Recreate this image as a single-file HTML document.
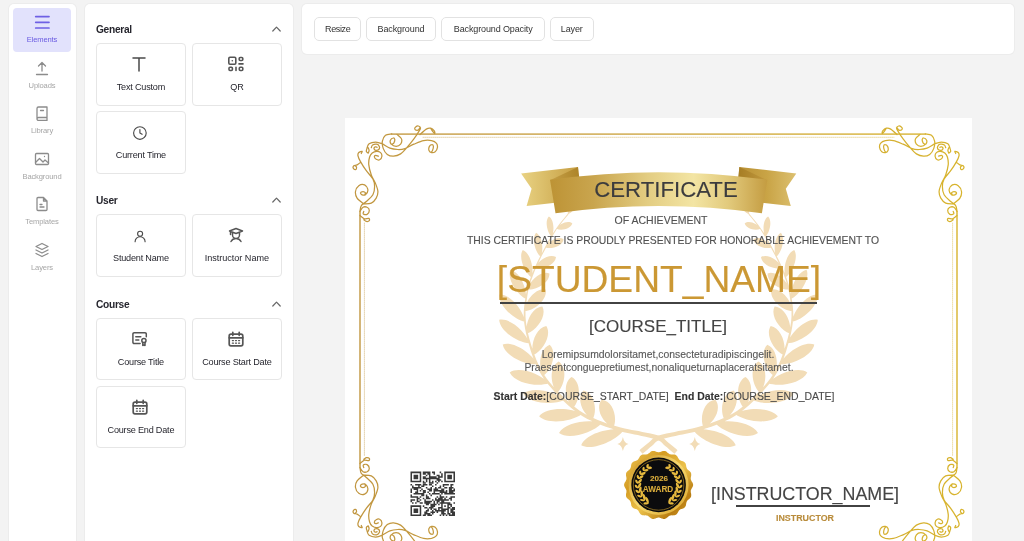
<!DOCTYPE html>
<html lang="en">
<head>
<meta charset="utf-8">
<title>Certificate Builder</title>
<style>
*{box-sizing:border-box;margin:0;padding:0}
html,body{width:1024px;height:541px;overflow:hidden;background:#f3f3f3;font-family:"Liberation Sans",sans-serif;color:#222}
.abs{position:absolute}
.panel{position:absolute;background:#fff;border-radius:5px;box-shadow:0 0 0 1px #ececec}
#nav{left:9px;top:4px;width:67px;height:560px}
.tile{position:absolute;left:4.400px;width:58px;height:44px;border-radius:4px;text-align:center}
.tile.active{background:#e2e2fc}
.tile .lbl{position:absolute;left:0;width:100%;top:27px;font-size:7.6px;line-height:10px;color:#a6a6a6;letter-spacing:-.15px;will-change:transform}
.tile.active .lbl{color:#6a5be2}
.tile svg{position:absolute;left:21px;top:6px;width:16px;height:16px;fill:none;stroke:#8c8c8c;stroke-width:1.3;stroke-linecap:round;stroke-linejoin:round}
.tile.active svg{stroke:#6e60e4;stroke-width:1.7}
#elements{left:85px;top:4px;width:208px;height:560px}
.sec{position:absolute;left:11px;font-size:10.2px;font-weight:bold;color:#26262e;line-height:14px;letter-spacing:-.3px;will-change:transform}
.chev{position:absolute;left:187px;width:9px;height:6px;fill:none;stroke:#666;stroke-width:1.2;stroke-linecap:round;stroke-linejoin:round}
.card{position:absolute;width:89.800px;height:62.500px;border:1px solid #e6e6e6;border-radius:4px;background:#fff;text-align:center}
.card .t{position:absolute;left:0;width:100%;top:36.500px;font-size:9.1px;line-height:12px;color:#26262e;white-space:nowrap;letter-spacing:-.2px;will-change:transform}
.card svg{position:absolute;left:34.400px;top:12px;width:16px;height:16px;fill:none;stroke:#4a4a4a;stroke-width:1.15;stroke-linecap:round;stroke-linejoin:round}
.c1{left:11px}.c2{left:107.300px}
#toolbar{left:302px;top:4px;width:712px;height:50px}
.btn{position:absolute;top:13px;height:24px;border:1px solid #e2e2e2;border-radius:5px;font-size:9px;line-height:23px;letter-spacing:-.12px;will-change:transform;text-align:center;color:#333;background:#fff;white-space:nowrap}
#canvas .ct{position:absolute;white-space:nowrap;transform:translateX(-50%);will-change:transform;-webkit-text-stroke:.12px}
#canvas b{color:#333}
#canvas{position:absolute;left:345px;top:118px;width:627px;height:440px;background:#fff;overflow:hidden}
</style>
</head>
<body>
<div id="nav" class="panel">
  <div class="tile active" style="top:4px">
    <svg viewBox="0 0 16 16"><path d="M1.700 2.600h13.300M1.700 8.300h13.300M1.700 14h13.300"/></svg>
    <div class="lbl">Elements</div>
  </div>
  <div class="tile" style="top:49.5px">
    <svg viewBox="0 0 16 16"><path d="M8 11V2.5M4.5 6L8 2.5 11.500 6M2.500 14.500h11"/></svg>
    <div class="lbl">Uploads</div>
  </div>
  <div class="tile" style="top:95px">
    <svg viewBox="0 0 16 16"><path d="M3 14V3.500a1.500 1.500 0 0 1 1.500-1.500h8.500v13.500H4.500a1.500 1.500 0 0 1 0-3h8.500M6.500 5.500h3"/></svg>
    <div class="lbl">Library</div>
  </div>
  <div class="tile" style="top:140.500px">
    <svg viewBox="0 0 16 16"><rect x="1.500" y="2.500" width="13" height="11" rx="1"/><path d="M1.500 11.500l4-4 3.500 3.500 2-2 3.500 3M10.500 5.500h.01"/></svg>
    <div class="lbl">Background</div>
  </div>
  <div class="tile" style="top:186px">
    <svg viewBox="0 0 16 16"><path d="M9.500 1.500H4a1 1 0 0 0-1 1v11a1 1 0 0 0 1 1h8a1 1 0 0 0 1-1V5zM9.500 1.500V5H13M6 8.500h2M6 11h4"/></svg>
    <div class="lbl">Templates</div>
  </div>
  <div class="tile" style="top:231.500px">
    <svg viewBox="0 0 16 16"><path d="M8 1.500l6 3-6 3-6-3zM2 8l6 3 6-3M2 11.500l6 3 6-3"/></svg>
    <div class="lbl">Layers</div>
  </div>
</div>

<div id="elements" class="panel">
  <div class="sec" style="top:19.100px">General</div>
  <svg class="chev" style="top:22px" viewBox="0 0 9 6"><path d="M.8 5L4.500 1.200 8.200 5"/></svg>
  <div class="card c1" style="top:39.400px"><svg viewBox="0 0 16 16"><path d="M2 2h12M8 2v13" style="stroke-width:1.500"/></svg><div class="t">Text Custom</div></div>
  <div class="card c2" style="top:39.400px"><svg viewBox="0 0 16 16" style="stroke-width:1.600;stroke:#555"><rect x=".8" y="1.200" width="7" height="7" rx="1.200"/><rect x="11.200" y="1.500" width="3.600" height="3" rx="1"/><path d="M11 7.900h4M4.300 4.700h.01M8 11.200v3.300"/><rect x="1" y="11.200" width="3.400" height="3.300" rx="1"/><rect x="11.300" y="11.200" width="3.500" height="3.300" rx="1"/></svg><div class="t">QR</div></div>
  <div class="card c1" style="top:107.400px"><svg viewBox="0 0 16 16" style="transform:translate(.9px,1px)"><circle cx="8" cy="8" r="6.300"/><path d="M8 4.500V8l2.200 1.300"/></svg><div class="t" style="top:37px">Current Time</div></div>

  <div class="sec" style="top:190.200px">User</div>
  <svg class="chev" style="top:193px" viewBox="0 0 9 6"><path d="M.8 5L4.500 1.200 8.200 5"/></svg>
  <div class="card c1" style="top:210.100px;height:63.400px"><svg viewBox="0 0 16 16" style="transform:translate(1.100px,1.200px)"><circle cx="8" cy="5.500" r="2.500"/><path d="M3 13.500a5 5 0 0 1 10 0"/></svg><div class="t">Student Name</div></div>
  <div class="card c2" style="top:210.100px;height:63.400px"><svg viewBox="0 0 16 16" style="stroke-width:1.450;stroke:#555"><path d="M1.500 4L8 1.500 14.500 4 8 6.500zM4.500 5.200V8a3.500 3.500 0 0 0 7 0V5.200M3 14.500c1-2 2.500-3 5-3s4 1 5 3M2.500 4.500v3"/></svg><div class="t" style="letter-spacing:-.03px">Instructor Name</div></div>

  <div class="sec" style="top:293.600px">Course</div>
  <svg class="chev" style="top:296.500px" viewBox="0 0 9 6"><path d="M.8 5L4.500 1.200 8.200 5"/></svg>
  <div class="card c1" style="top:313.700px"><svg viewBox="0 0 16 16" style="stroke-width:1.500;stroke:#555;transform:translate(.6px,-.3px)"><path d="M8.500 12.800H2.500a1.200 1.200 0 0 1-1.200-1.200v-8.400a1.200 1.200 0 0 1 1.200-1.200h11a1.200 1.200 0 0 1 1.200 1.200V6M4.200 6h5M4.200 9.200h3"/><circle cx="12.300" cy="9.800" r="2.100"/><path d="M11.200 12v2.800l1.100-.6 1.100.6V12"/></svg><div class="t" style="top:37.300px">Course Title</div></div>
  <div class="card c2" style="top:313.700px"><svg viewBox="0 0 16 16" style="stroke-width:1.700;stroke:#555"><rect x="1.200" y="3.200" width="13.600" height="11.600" rx="1.800"/><path d="M1.200 6.800h13.600M4.800 1.300v3M11.200 1.300v3"/><path style="stroke-width:1.300" d="M4.400 9.600h1M7.500 9.600h1M10.600 9.600h1M4.400 12.200h1M7.500 12.200h1M10.600 12.200h1"/></svg><div class="t" style="top:37.300px">Course Start Date</div></div>
  <div class="card c1" style="top:381.900px"><svg viewBox="0 0 16 16" style="stroke-width:1.700;stroke:#555;transform:translateX(1px)"><rect x="1.200" y="3.200" width="13.600" height="11.600" rx="1.800"/><path d="M1.200 6.800h13.600M4.800 1.300v3M11.200 1.300v3"/><path style="stroke-width:1.300" d="M4.400 9.600h1M7.500 9.600h1M10.600 9.600h1M4.400 12.200h1M7.500 12.200h1M10.600 12.200h1"/></svg><div class="t" style="top:37.300px">Course End Date</div></div>
</div>

<div id="toolbar" class="panel">
  <div class="btn" style="left:12px;width:47.400px;letter-spacing:-.35px">Resize</div>
  <div class="btn" style="left:64.300px;width:70px">Background</div>
  <div class="btn" style="left:139.200px;width:104.400px">Background Opacity</div>
  <div class="btn" style="left:248.300px;width:43.500px">Layer</div>
</div>

<div id="canvas">
<svg class="abs" style="left:0;top:0" width="627" height="443" viewBox="0 0 627 443">
<defs><linearGradient id="gl" gradientUnits="userSpaceOnUse" x1="0" y1="0" x2="627" y2="0"><stop offset="0" stop-color="#c0953f"/><stop offset=".5" stop-color="#cda53f"/><stop offset="1" stop-color="#d8b42c"/></linearGradient>
<path id="wr" d="M332.5 332.2L331.3 331.1L329.4 329.6L327.3 327.8L325.1 326.0L323.2 324.5L321.8 323.2L320.3 321.8L318.6 320.3L316.3 318.8L313.4 317.6L309.7 316.5L305.6 315.5L301.4 314.7L297.3 313.9L293.6 313.1L290.1 312.5L286.8 311.9L283.4 311.3L279.8 310.5L275.7 309.4L271.3 308.2L266.7 306.9L262.0 305.4L257.4 303.7L252.8 301.9L248.3 300.0L243.7 297.9L239.2 295.5L234.7 292.7L230.1 289.3L225.3 285.3L220.5 280.9L216.0 276.6L211.9 272.4L208.2 268.4L204.8 264.4L201.7 260.5L198.8 256.3L196.2 251.9L193.8 247.3L191.6 242.5L189.7 237.5L187.9 232.3L186.2 227.0L184.5 221.2L183.0 215.3L181.8 209.4L180.9 203.7L180.5 198.4L180.5 193.3L180.9 188.3L181.5 183.5L182.2 178.9L182.9 174.5L183.9 170.3L185.0 166.3L186.2 162.3L187.7 158.2L189.2 154.2L190.8 150.2L192.6 146.2L194.7 142.0L196.9 137.5L199.6 132.4L202.4 127.0L205.5 121.6L208.5 116.4L211.4 111.8L214.7 107.3L218.0 103.1L221.1 99.3L223.5 96.4L222.7 95.8L220.3 98.7L217.2 102.5L213.8 106.7L210.6 111.2L207.6 115.8L204.5 121.0L201.4 126.5L198.5 131.9L195.9 136.9L193.5 141.5L191.5 145.7L189.6 149.7L187.9 153.7L186.3 157.8L184.9 161.8L183.6 165.9L182.4 169.9L181.4 174.2L180.6 178.6L179.9 183.3L179.2 188.2L178.8 193.2L178.7 198.5L179.1 203.9L179.9 209.7L181.1 215.7L182.6 221.7L184.2 227.5L185.8 233.0L187.6 238.3L189.5 243.3L191.7 248.3L194.1 253.1L196.8 257.6L199.7 261.9L202.8 266.1L206.3 270.1L210.0 274.2L214.0 278.5L218.5 283.0L223.3 287.5L228.1 291.6L232.9 295.3L237.6 298.3L242.3 300.9L246.9 303.1L251.5 305.0L256.1 306.9L260.8 308.7L265.6 310.3L270.3 311.8L274.7 313.1L278.8 314.2L282.6 315.1L286.1 315.8L289.4 316.4L292.8 317.1L296.5 317.9L300.6 318.8L304.7 319.7L308.6 320.7L311.9 321.7L314.2 322.7L315.9 323.8L317.2 325.0L318.5 326.4L320.2 328.0L322.2 329.6L324.3 331.4L326.4 333.2L328.2 334.7L329.5 335.8ZM278.7 312.2C265.5 308.8 240.8 315.7 236.2 327.2C247.0 333.2 270.6 323.0 278.7 312.2ZM268.5 309.3C272.9 299.3 267.9 282.8 256.6 281.8C249.7 290.6 258.1 305.6 268.5 309.3ZM256.8 305.3C244.4 300.5 219.6 304.4 214.0 315.1C223.7 322.2 247.7 315.0 256.8 305.3ZM247.6 301.5C252.8 291.9 249.3 274.8 238.4 272.6C230.8 280.7 237.8 296.7 247.6 301.5ZM236.9 296.0C225.8 289.3 201.3 288.9 194.1 298.3C202.3 306.8 226.6 303.9 236.9 296.0ZM228.3 289.8C235.6 281.7 236.4 264.1 226.6 259.1C217.4 265.1 220.1 282.5 228.3 289.8ZM219.5 282.0C210.3 273.3 187.0 268.1 178.3 275.8C184.4 285.6 208.2 287.5 219.5 282.0ZM212.3 274.7C220.2 267.2 222.7 249.6 213.6 243.5C204.1 248.7 205.0 266.6 212.3 274.7ZM203.8 265.3C195.9 255.7 174.0 248.0 164.7 254.4C169.4 264.8 192.2 269.4 203.8 265.3ZM198.3 257.7C207.1 251.5 212.4 234.2 204.7 226.8C194.6 230.5 192.6 248.5 198.3 257.7ZM192.0 246.2C186.9 235.2 168.1 222.6 157.7 226.5C159.6 237.5 180.0 247.3 192.0 246.2ZM188.3 237.0C198.2 232.7 207.1 216.7 201.3 207.9C190.9 209.5 185.0 226.8 188.3 237.0ZM184.6 225.4C181.2 214.1 164.8 199.4 154.2 201.8C154.5 212.7 172.8 224.9 184.6 225.4ZM182.1 215.5C192.0 212.2 202.2 197.6 197.4 188.5C187.1 189.0 179.7 205.3 182.1 215.5ZM180.0 203.8C178.5 192.4 165.1 175.8 154.5 176.5C153.0 187.0 168.7 201.6 180.0 203.8ZM179.7 193.3C189.9 192.6 203.0 181.2 200.6 171.4C190.7 169.5 179.9 183.0 179.7 193.3ZM181.0 181.1C182.4 170.9 174.7 153.5 165.4 151.8C161.6 160.5 171.8 176.6 181.0 181.1ZM182.8 171.5C191.9 172.4 205.1 164.4 204.4 155.4C196.0 152.2 184.5 162.5 182.8 171.5ZM186.5 159.4C189.4 150.9 185.5 134.9 177.8 132.0C173.1 138.9 179.3 154.1 186.5 159.4ZM190.2 150.0C197.9 152.0 210.3 146.9 211.0 139.1C204.1 135.2 192.9 142.5 190.2 150.0ZM195.6 138.8C199.0 131.9 197.4 118.0 191.1 114.7C186.4 120.1 190.0 133.6 195.6 138.8ZM200.5 129.5C206.9 131.6 217.7 127.8 218.6 121.2C213.0 117.5 203.1 123.2 200.5 129.5ZM206.5 118.7C209.7 113.1 209.1 101.4 203.9 98.4C199.6 102.6 202.0 114.1 206.5 118.7ZM211.5 110.8C216.7 113.1 226.0 110.8 227.3 105.3C222.9 101.8 214.2 105.7 211.5 110.8ZM222.8 96.5C227.7 94.5 233.3 86.6 231.7 82.0C226.8 82.6 222.3 91.2 222.8 96.5Z"/>
</defs>
<g fill="#f2dcb6">
<use href="#wr"/><use href="#wr" transform="translate(627 0) scale(-1 1)"/>
<path d="M277.9 319.0Q279.0 324.9 283.5 326.0Q279.0 327.1 277.9 333.0Q276.8 327.1 272.3 326.0Q276.8 324.9 277.9 319.0Z"/><path d="M349.8 319.0Q350.9 324.9 355.4 326.0Q350.9 327.1 349.8 333.0Q348.7 327.1 344.2 326.0Q348.7 324.9 349.8 319.0Z"/>
</g>
<g fill="none" stroke="url(#gl)" stroke-width="1.250" stroke-linecap="round" stroke-linejoin="round">
<path d="M46.7 15.8C45.7 16.1 42.0 16.1 40.5 17.3C39.0 18.5 37.8 20.9 37.4 23.1C37.0 25.3 37.5 28.4 38.3 30.6C39.1 32.8 40.6 35.1 42.3 36.4C44.0 37.7 46.3 38.3 48.5 38.2C50.7 38.1 53.4 37.3 55.6 35.9C57.8 34.5 59.6 32.2 61.8 29.7C64.0 27.2 66.8 23.7 68.9 20.9C71.0 18.1 73.1 14.8 74.2 12.9C75.3 11.1 75.7 10.6 75.5 9.8C75.3 9.0 74.1 8.2 73.3 8.0C72.5 7.8 71.3 8.4 70.7 8.9C70.1 9.4 69.6 10.5 69.8 11.1C70.0 11.7 71.3 12.3 72.0 12.4C72.7 12.5 73.5 11.8 73.9 11.4C74.3 11.0 74.5 10.2 74.6 9.9M52.0 16.4C52.8 17.1 55.9 19.3 56.5 20.9C57.1 22.5 56.5 24.9 55.6 26.2C54.7 27.4 52.7 28.4 51.1 28.4C49.5 28.4 47.2 27.2 46.3 26.2C45.3 25.2 45.0 23.2 45.4 22.2C45.8 21.2 47.8 20.1 48.5 20.0C49.2 19.9 49.7 20.9 49.8 21.7C49.9 22.5 49.3 24.1 48.9 24.9C48.5 25.6 47.4 26.0 47.1 26.2M23.2 35.1C22.9 34.9 21.6 34.5 21.4 33.7C21.2 33.0 21.4 31.9 21.9 30.6C22.3 29.3 22.6 26.8 24.1 25.7C25.6 24.6 28.6 24.0 30.7 24.0C32.8 24.0 34.5 24.7 36.9 25.7C39.3 26.7 42.2 29.2 44.9 30.2C47.6 31.2 50.4 31.4 52.9 31.5C55.4 31.6 57.3 31.5 60.0 30.6C62.7 29.7 65.8 27.5 68.9 26.2C72.0 24.9 75.6 23.2 78.6 22.6C81.5 22.0 84.4 22.2 86.6 22.6C88.8 23.1 90.5 24.1 91.5 25.3C92.5 26.5 92.6 28.3 92.4 29.7C92.2 31.1 91.2 32.9 90.2 33.7C89.2 34.5 87.6 34.8 86.6 34.6C85.6 34.4 84.4 33.4 84.0 32.4C83.6 31.4 83.9 29.4 84.4 28.4C84.9 27.4 86.4 26.6 87.1 26.6C87.8 26.6 88.3 27.4 88.4 28.4C88.5 29.4 87.9 31.4 87.5 32.4C87.1 33.4 86.4 33.9 86.2 34.2M23.2 35.1C23.4 34.6 24.1 33.3 24.1 32.4C24.1 31.5 23.4 30.1 23.2 29.7M75.0 16.5C76.0 15.6 79.5 12.2 81.3 11.1C83.1 10.0 84.4 9.9 85.7 10.2C87.0 10.5 88.6 12.0 89.3 12.9C90.0 13.8 90.0 15.5 89.7 15.6C89.5 15.7 88.5 14.4 87.8 13.5C87.1 12.6 86.0 10.8 85.7 10.2M26.3 29.7C26.5 29.3 26.7 27.7 27.6 27.1C28.5 26.5 30.5 26.0 31.6 26.2C32.7 26.4 33.9 27.5 34.3 28.4C34.7 29.3 34.4 30.8 33.8 31.5C33.2 32.2 31.5 32.5 30.7 32.4C29.9 32.2 29.1 31.2 29.0 30.6C28.9 30.0 29.8 29.0 30.3 28.8C30.8 28.6 31.8 29.2 32.1 29.3M15.0 93.4C15.2 92.4 15.2 89.2 16.3 87.6C17.4 85.9 19.4 85.3 21.3 83.5C23.2 81.7 26.5 79.3 27.9 76.8C29.3 74.3 29.6 71.1 29.6 68.5C29.6 65.9 29.3 63.6 27.9 61.0C26.5 58.4 23.4 55.6 21.3 52.7C19.2 49.8 16.9 46.1 15.5 43.6C14.1 41.1 13.3 39.3 13.0 37.8C12.7 36.3 13.1 35.2 13.8 34.5C14.5 33.8 16.7 33.1 17.1 33.3C17.5 33.5 16.4 35.1 16.3 35.5M18.8 86.0C17.7 85.0 13.5 82.2 12.1 80.1C10.7 78.0 10.2 75.6 10.5 73.5C10.8 71.4 12.3 68.8 13.8 67.7C15.3 66.6 18.1 66.2 19.6 66.9C21.1 67.6 22.8 70.2 22.9 71.8C23.0 73.4 21.4 76.0 20.4 76.8C19.4 77.6 17.9 77.1 17.1 76.8C16.3 76.5 15.3 75.3 15.5 74.8C15.7 74.2 17.2 73.5 18.0 73.5C18.8 73.5 20.1 74.2 20.4 74.8C20.7 75.4 19.7 76.7 19.6 77.1M33.4 38.2C32.9 38.1 31.4 37.2 30.7 37.3C30.0 37.4 29.3 38.3 29.4 39.0C29.5 39.7 30.3 40.8 31.2 41.3C32.1 41.8 33.8 42.2 34.7 41.7C35.7 41.2 36.8 39.4 36.9 38.2C37.0 37.0 36.5 35.4 35.6 34.6C34.7 33.8 33.0 33.2 31.6 33.3C30.2 33.4 28.4 34.1 27.2 35.1C26.0 36.1 25.2 37.0 24.6 39.0C24.0 41.0 23.5 43.9 23.8 46.9C24.1 49.9 25.2 53.8 26.3 56.9C27.4 60.0 29.3 62.4 30.4 65.2C31.5 68.0 32.8 71.0 32.9 73.5C33.0 76.0 32.3 78.2 31.2 80.1C30.1 82.0 28.4 84.1 26.3 85.1C24.2 86.1 20.1 85.8 18.8 86.0M15.5 44.4C14.9 44.8 13.2 46.3 12.1 46.9C11.0 47.5 9.4 47.2 8.8 47.7C8.2 48.2 8.0 49.6 8.3 50.2C8.6 50.9 9.9 51.7 10.5 51.6C11.1 51.5 11.6 50.1 11.6 49.4C11.6 48.7 10.5 47.9 10.3 47.6M15.0 93.4C15.5 92.7 16.8 90.0 18.0 89.3C19.2 88.6 21.1 88.8 22.1 89.3C23.2 89.8 24.3 91.4 24.3 92.6C24.3 93.8 23.1 95.9 22.1 96.4C21.1 97.0 18.9 96.4 18.3 95.9C17.8 95.4 18.7 93.8 18.8 93.4M15.0 97.5C15.3 97.8 16.3 98.6 17.1 99.2C17.9 99.8 18.5 100.7 19.6 100.9C20.7 101.1 23.0 100.1 23.8 100.4C24.6 100.7 24.7 102.1 24.3 102.6C23.9 103.1 22.2 103.6 21.3 103.4C20.4 103.2 19.2 102.0 18.8 101.7M580.3 15.8C581.3 16.1 585.0 16.1 586.5 17.3C588.0 18.5 589.2 20.9 589.6 23.1C590.0 25.3 589.5 28.4 588.7 30.6C587.9 32.8 586.4 35.1 584.7 36.4C583.0 37.7 580.7 38.3 578.5 38.2C576.3 38.1 573.6 37.3 571.4 35.9C569.2 34.5 567.4 32.2 565.2 29.7C563.0 27.2 560.2 23.7 558.1 20.9C556.0 18.1 553.9 14.8 552.8 12.9C551.7 11.1 551.4 10.6 551.5 9.8C551.6 9.0 552.9 8.2 553.7 8.0C554.5 7.8 555.7 8.4 556.3 8.9C556.9 9.4 557.4 10.5 557.2 11.1C557.0 11.7 555.7 12.3 555.0 12.4C554.3 12.5 553.5 11.8 553.1 11.4C552.7 11.0 552.5 10.2 552.4 9.9M575.0 16.4C574.2 17.1 571.1 19.3 570.5 20.9C569.9 22.5 570.5 24.9 571.4 26.2C572.3 27.4 574.3 28.4 575.9 28.4C577.5 28.4 579.8 27.2 580.7 26.2C581.7 25.2 582.0 23.2 581.6 22.2C581.2 21.2 579.2 20.1 578.5 20.0C577.8 19.9 577.3 20.9 577.2 21.7C577.1 22.5 577.7 24.1 578.1 24.9C578.5 25.6 579.6 26.0 579.9 26.2M603.8 35.1C604.1 34.9 605.4 34.5 605.6 33.7C605.8 33.0 605.6 31.9 605.1 30.6C604.6 29.3 604.4 26.8 602.9 25.7C601.4 24.6 598.4 24.0 596.3 24.0C594.2 24.0 592.5 24.7 590.1 25.7C587.7 26.7 584.8 29.2 582.1 30.2C579.4 31.2 576.6 31.4 574.1 31.5C571.6 31.6 569.7 31.5 567.0 30.6C564.3 29.7 561.2 27.5 558.1 26.2C555.0 24.9 551.4 23.2 548.4 22.6C545.4 22.0 542.5 22.2 540.4 22.6C538.2 23.1 536.5 24.1 535.5 25.3C534.5 26.5 534.4 28.3 534.6 29.7C534.8 31.1 535.8 32.9 536.8 33.7C537.8 34.5 539.4 34.8 540.4 34.6C541.4 34.4 542.6 33.4 543.0 32.4C543.4 31.4 543.1 29.4 542.6 28.4C542.1 27.4 540.6 26.6 539.9 26.6C539.2 26.6 538.7 27.4 538.6 28.4C538.5 29.4 539.1 31.4 539.5 32.4C539.9 33.4 540.6 33.9 540.8 34.2M603.8 35.1C603.6 34.6 602.9 33.3 602.9 32.4C602.9 31.5 603.6 30.1 603.8 29.7M552.0 16.5C551.0 15.6 547.5 12.2 545.7 11.1C543.9 10.0 542.6 9.9 541.3 10.2C540.0 10.5 538.4 12.0 537.7 12.9C537.0 13.8 537.0 15.5 537.3 15.6C537.5 15.7 538.5 14.4 539.2 13.5C539.9 12.6 540.9 10.8 541.3 10.2M600.7 29.7C600.5 29.3 600.3 27.7 599.4 27.1C598.5 26.5 596.5 26.0 595.4 26.2C594.3 26.4 593.1 27.5 592.7 28.4C592.3 29.3 592.6 30.8 593.2 31.5C593.8 32.2 595.5 32.5 596.3 32.4C597.1 32.2 597.9 31.2 598.0 30.6C598.1 30.0 597.2 29.0 596.7 28.8C596.2 28.6 595.2 29.2 594.9 29.3M612.0 93.4C611.8 92.4 611.8 89.2 610.7 87.6C609.7 85.9 607.6 85.3 605.7 83.5C603.8 81.7 600.5 79.3 599.1 76.8C597.7 74.3 597.4 71.1 597.4 68.5C597.4 65.9 597.7 63.6 599.1 61.0C600.5 58.4 603.6 55.6 605.7 52.7C607.8 49.8 610.1 46.1 611.5 43.6C612.9 41.1 613.7 39.3 614.0 37.8C614.3 36.3 613.9 35.2 613.2 34.5C612.5 33.8 610.3 33.1 609.9 33.3C609.5 33.5 610.6 35.1 610.7 35.5M608.2 86.0C609.3 85.0 613.5 82.2 614.9 80.1C616.3 78.0 616.8 75.6 616.5 73.5C616.2 71.4 614.7 68.8 613.2 67.7C611.7 66.6 608.9 66.2 607.4 66.9C605.9 67.6 604.2 70.2 604.1 71.8C604.0 73.4 605.6 76.0 606.6 76.8C607.6 77.6 609.1 77.1 609.9 76.8C610.7 76.5 611.6 75.3 611.5 74.8C611.4 74.2 609.8 73.5 609.0 73.5C608.2 73.5 606.9 74.2 606.6 74.8C606.3 75.4 607.3 76.7 607.4 77.1M593.6 38.2C594.0 38.1 595.6 37.2 596.3 37.3C597.0 37.4 597.7 38.3 597.6 39.0C597.5 39.7 596.7 40.8 595.8 41.3C594.9 41.8 593.2 42.2 592.3 41.7C591.3 41.2 590.2 39.4 590.1 38.2C590.0 37.0 590.5 35.4 591.4 34.6C592.3 33.8 594.0 33.2 595.4 33.3C596.8 33.4 598.6 34.1 599.8 35.1C601.0 36.1 601.8 37.0 602.4 39.0C603.0 41.0 603.5 43.9 603.2 46.9C602.9 49.9 601.8 53.8 600.7 56.9C599.6 60.0 597.7 62.4 596.6 65.2C595.5 68.0 594.2 71.0 594.1 73.5C594.0 76.0 594.7 78.2 595.8 80.1C596.9 82.0 598.6 84.1 600.7 85.1C602.8 86.1 607.0 85.8 608.2 86.0M611.5 44.4C612.1 44.8 613.8 46.3 614.9 46.9C616.0 47.5 617.6 47.2 618.2 47.7C618.8 48.2 619.0 49.6 618.7 50.2C618.4 50.9 617.0 51.7 616.5 51.6C616.0 51.5 615.4 50.1 615.4 49.4C615.4 48.7 616.5 47.9 616.7 47.6M612.0 93.4C611.5 92.7 610.2 90.0 609.0 89.3C607.8 88.6 605.9 88.8 604.9 89.3C603.9 89.8 602.7 91.4 602.7 92.6C602.7 93.8 603.9 95.9 604.9 96.4C605.9 97.0 608.2 96.4 608.7 95.9C609.2 95.4 608.3 93.8 608.2 93.4M612.0 97.5C611.6 97.8 610.7 98.6 609.9 99.2C609.1 99.8 608.5 100.7 607.4 100.9C606.3 101.1 604.0 100.1 603.2 100.4C602.4 100.7 602.3 102.1 602.7 102.6C603.1 103.1 604.8 103.6 605.7 103.4C606.6 103.2 607.8 102.0 608.2 101.7M46.7 427.2C45.7 426.9 42.0 426.9 40.5 425.7C39.0 424.5 37.8 422.1 37.4 419.9C37.0 417.7 37.5 414.6 38.3 412.4C39.1 410.2 40.6 407.9 42.3 406.6C44.0 405.3 46.3 404.7 48.5 404.8C50.7 404.9 53.4 405.7 55.6 407.1C57.8 408.5 59.6 410.8 61.8 413.3C64.0 415.8 66.8 419.3 68.9 422.1C71.0 424.9 73.1 428.2 74.2 430.1C75.3 432.0 75.7 432.4 75.5 433.2C75.3 434.0 74.1 434.9 73.3 435.0C72.5 435.1 71.3 434.6 70.7 434.1C70.1 433.6 69.6 432.5 69.8 431.9C70.0 431.3 71.3 430.7 72.0 430.6C72.7 430.6 73.5 431.2 73.9 431.6C74.3 432.0 74.5 432.9 74.6 433.1M52.0 426.6C52.8 425.9 55.9 423.7 56.5 422.1C57.1 420.5 56.5 418.1 55.6 416.8C54.7 415.6 52.7 414.6 51.1 414.6C49.5 414.6 47.2 415.8 46.3 416.8C45.3 417.8 45.0 419.8 45.4 420.8C45.8 421.8 47.8 422.9 48.5 423.0C49.2 423.1 49.7 422.1 49.8 421.3C49.9 420.5 49.3 418.9 48.9 418.1C48.5 417.4 47.4 417.0 47.1 416.8M23.2 407.9C22.9 408.1 21.6 408.6 21.4 409.3C21.2 410.1 21.4 411.1 21.9 412.4C22.3 413.7 22.6 416.2 24.1 417.3C25.6 418.4 28.6 419.0 30.7 419.0C32.8 419.0 34.5 418.3 36.9 417.3C39.3 416.3 42.2 413.8 44.9 412.8C47.6 411.8 50.4 411.6 52.9 411.5C55.4 411.4 57.3 411.5 60.0 412.4C62.7 413.3 65.8 415.5 68.9 416.8C72.0 418.1 75.6 419.8 78.6 420.4C81.5 421.0 84.4 420.8 86.6 420.4C88.8 419.9 90.5 418.9 91.5 417.7C92.5 416.5 92.6 414.7 92.4 413.3C92.2 411.9 91.2 410.1 90.2 409.3C89.2 408.5 87.6 408.2 86.6 408.4C85.6 408.6 84.4 409.6 84.0 410.6C83.6 411.6 83.9 413.6 84.4 414.6C84.9 415.6 86.4 416.4 87.1 416.4C87.8 416.4 88.3 415.6 88.4 414.6C88.5 413.6 87.9 411.6 87.5 410.6C87.1 409.6 86.4 409.1 86.2 408.8M23.2 407.9C23.4 408.3 24.1 409.7 24.1 410.6C24.1 411.5 23.4 412.9 23.2 413.3M75.0 426.5C76.0 427.4 79.5 430.8 81.3 431.9C83.1 432.9 84.4 433.1 85.7 432.8C87.0 432.5 88.6 431.0 89.3 430.1C90.0 429.2 90.0 427.5 89.7 427.4C89.5 427.3 88.5 428.6 87.8 429.5C87.1 430.4 86.0 432.2 85.7 432.8M26.3 413.3C26.5 413.7 26.7 415.3 27.6 415.9C28.5 416.5 30.5 417.0 31.6 416.8C32.7 416.6 33.9 415.5 34.3 414.6C34.7 413.7 34.4 412.2 33.8 411.5C33.2 410.8 31.5 410.5 30.7 410.6C29.9 410.8 29.1 411.8 29.0 412.4C28.9 413.0 29.8 414.0 30.3 414.2C30.8 414.4 31.8 413.8 32.1 413.7M15.0 349.6C15.2 350.6 15.2 353.8 16.3 355.4C17.4 357.0 19.4 357.7 21.3 359.5C23.2 361.3 26.5 363.7 27.9 366.2C29.3 368.7 29.6 371.9 29.6 374.5C29.6 377.1 29.3 379.4 27.9 382.0C26.5 384.6 23.4 387.4 21.3 390.3C19.2 393.2 16.9 396.9 15.5 399.4C14.1 401.9 13.3 403.7 13.0 405.2C12.7 406.7 13.1 407.8 13.8 408.5C14.5 409.2 16.7 409.9 17.1 409.7C17.5 409.5 16.4 407.9 16.3 407.5M18.8 357.0C17.7 358.0 13.5 360.8 12.1 362.9C10.7 365.0 10.2 367.4 10.5 369.5C10.8 371.6 12.3 374.2 13.8 375.3C15.3 376.4 18.1 376.8 19.6 376.1C21.1 375.4 22.8 372.9 22.9 371.2C23.0 369.5 21.4 367.0 20.4 366.2C19.4 365.4 17.9 365.9 17.1 366.2C16.3 366.5 15.3 367.6 15.5 368.2C15.7 368.8 17.2 369.5 18.0 369.5C18.8 369.5 20.1 368.8 20.4 368.2C20.7 367.6 19.7 366.3 19.6 365.9M33.4 404.8C32.9 404.9 31.4 405.8 30.7 405.7C30.0 405.6 29.3 404.7 29.4 404.0C29.5 403.3 30.3 402.1 31.2 401.7C32.1 401.2 33.8 400.8 34.7 401.3C35.7 401.8 36.8 403.6 36.9 404.8C37.0 406.0 36.5 407.6 35.6 408.4C34.7 409.2 33.0 409.8 31.6 409.7C30.2 409.6 28.4 408.8 27.2 407.9C26.0 406.9 25.2 406.0 24.6 404.0C24.0 402.0 23.5 399.1 23.8 396.1C24.1 393.1 25.2 389.2 26.3 386.1C27.4 383.1 29.3 380.6 30.4 377.8C31.5 375.0 32.8 372.0 32.9 369.5C33.0 367.0 32.3 364.8 31.2 362.9C30.1 361.0 28.4 358.9 26.3 357.9C24.2 356.9 20.1 357.1 18.8 357.0M15.5 398.6C14.9 398.2 13.2 396.7 12.1 396.1C11.0 395.6 9.4 395.9 8.8 395.3C8.2 394.8 8.0 393.5 8.3 392.8C8.6 392.1 9.9 391.3 10.5 391.4C11.1 391.5 11.6 392.9 11.6 393.6C11.6 394.3 10.5 395.1 10.3 395.4M15.0 349.6C15.5 350.3 16.8 353.0 18.0 353.7C19.2 354.4 21.1 354.2 22.1 353.7C23.2 353.1 24.3 351.6 24.3 350.4C24.3 349.2 23.1 347.2 22.1 346.6C21.1 346.1 18.9 346.6 18.3 347.1C17.8 347.6 18.7 349.2 18.8 349.6M15.0 345.5C15.3 345.2 16.3 344.4 17.1 343.8C17.9 343.2 18.5 342.3 19.6 342.1C20.7 341.9 23.0 342.9 23.8 342.6C24.6 342.3 24.7 340.9 24.3 340.4C23.9 339.9 22.2 339.5 21.3 339.6C20.4 339.8 19.2 341.0 18.8 341.3M580.3 427.2C581.3 426.9 585.0 426.9 586.5 425.7C588.0 424.5 589.2 422.1 589.6 419.9C590.0 417.7 589.5 414.6 588.7 412.4C587.9 410.2 586.4 407.9 584.7 406.6C583.0 405.3 580.7 404.7 578.5 404.8C576.3 404.9 573.6 405.7 571.4 407.1C569.2 408.5 567.4 410.8 565.2 413.3C563.0 415.8 560.2 419.3 558.1 422.1C556.0 424.9 553.9 428.2 552.8 430.1C551.7 432.0 551.4 432.4 551.5 433.2C551.6 434.0 552.9 434.9 553.7 435.0C554.5 435.1 555.7 434.6 556.3 434.1C556.9 433.6 557.4 432.5 557.2 431.9C557.0 431.3 555.7 430.7 555.0 430.6C554.3 430.6 553.5 431.2 553.1 431.6C552.7 432.0 552.5 432.9 552.4 433.1M575.0 426.6C574.2 425.9 571.1 423.7 570.5 422.1C569.9 420.5 570.5 418.1 571.4 416.8C572.3 415.6 574.3 414.6 575.9 414.6C577.5 414.6 579.8 415.8 580.7 416.8C581.7 417.8 582.0 419.8 581.6 420.8C581.2 421.8 579.2 422.9 578.5 423.0C577.8 423.1 577.3 422.1 577.2 421.3C577.1 420.5 577.7 418.9 578.1 418.1C578.5 417.4 579.6 417.0 579.9 416.8M603.8 407.9C604.1 408.1 605.4 408.6 605.6 409.3C605.8 410.1 605.6 411.1 605.1 412.4C604.6 413.7 604.4 416.2 602.9 417.3C601.4 418.4 598.4 419.0 596.3 419.0C594.2 419.0 592.5 418.3 590.1 417.3C587.7 416.3 584.8 413.8 582.1 412.8C579.4 411.8 576.6 411.6 574.1 411.5C571.6 411.4 569.7 411.5 567.0 412.4C564.3 413.3 561.2 415.5 558.1 416.8C555.0 418.1 551.4 419.8 548.4 420.4C545.4 421.0 542.5 420.8 540.4 420.4C538.2 419.9 536.5 418.9 535.5 417.7C534.5 416.5 534.4 414.7 534.6 413.3C534.8 411.9 535.8 410.1 536.8 409.3C537.8 408.5 539.4 408.2 540.4 408.4C541.4 408.6 542.6 409.6 543.0 410.6C543.4 411.6 543.1 413.6 542.6 414.6C542.1 415.6 540.6 416.4 539.9 416.4C539.2 416.4 538.7 415.6 538.6 414.6C538.5 413.6 539.1 411.6 539.5 410.6C539.9 409.6 540.6 409.1 540.8 408.8M603.8 407.9C603.6 408.3 602.9 409.7 602.9 410.6C602.9 411.5 603.6 412.9 603.8 413.3M552.0 426.5C551.0 427.4 547.5 430.8 545.7 431.9C543.9 432.9 542.6 433.1 541.3 432.8C540.0 432.5 538.4 431.0 537.7 430.1C537.0 429.2 537.0 427.5 537.3 427.4C537.5 427.3 538.5 428.6 539.2 429.5C539.9 430.4 540.9 432.2 541.3 432.8M600.7 413.3C600.5 413.7 600.3 415.3 599.4 415.9C598.5 416.5 596.5 417.0 595.4 416.8C594.3 416.6 593.1 415.5 592.7 414.6C592.3 413.7 592.6 412.2 593.2 411.5C593.8 410.8 595.5 410.5 596.3 410.6C597.1 410.8 597.9 411.8 598.0 412.4C598.1 413.0 597.2 414.0 596.7 414.2C596.2 414.4 595.2 413.8 594.9 413.7M612.0 349.6C611.8 350.6 611.8 353.8 610.7 355.4C609.7 357.0 607.6 357.7 605.7 359.5C603.8 361.3 600.5 363.7 599.1 366.2C597.7 368.7 597.4 371.9 597.4 374.5C597.4 377.1 597.7 379.4 599.1 382.0C600.5 384.6 603.6 387.4 605.7 390.3C607.8 393.2 610.1 396.9 611.5 399.4C612.9 401.9 613.7 403.7 614.0 405.2C614.3 406.7 613.9 407.8 613.2 408.5C612.5 409.2 610.3 409.9 609.9 409.7C609.5 409.5 610.6 407.9 610.7 407.5M608.2 357.0C609.3 358.0 613.5 360.8 614.9 362.9C616.3 365.0 616.8 367.4 616.5 369.5C616.2 371.6 614.7 374.2 613.2 375.3C611.7 376.4 608.9 376.8 607.4 376.1C605.9 375.4 604.2 372.9 604.1 371.2C604.0 369.5 605.6 367.0 606.6 366.2C607.6 365.4 609.1 365.9 609.9 366.2C610.7 366.5 611.6 367.6 611.5 368.2C611.4 368.8 609.8 369.5 609.0 369.5C608.2 369.5 606.9 368.8 606.6 368.2C606.3 367.6 607.3 366.3 607.4 365.9M593.6 404.8C594.0 404.9 595.6 405.8 596.3 405.7C597.0 405.6 597.7 404.7 597.6 404.0C597.5 403.3 596.7 402.1 595.8 401.7C594.9 401.2 593.2 400.8 592.3 401.3C591.3 401.8 590.2 403.6 590.1 404.8C590.0 406.0 590.5 407.6 591.4 408.4C592.3 409.2 594.0 409.8 595.4 409.7C596.8 409.6 598.6 408.8 599.8 407.9C601.0 406.9 601.8 406.0 602.4 404.0C603.0 402.0 603.5 399.1 603.2 396.1C602.9 393.1 601.8 389.2 600.7 386.1C599.6 383.1 597.7 380.6 596.6 377.8C595.5 375.0 594.2 372.0 594.1 369.5C594.0 367.0 594.7 364.8 595.8 362.9C596.9 361.0 598.6 358.9 600.7 357.9C602.8 356.9 607.0 357.1 608.2 357.0M611.5 398.6C612.1 398.2 613.8 396.7 614.9 396.1C616.0 395.6 617.6 395.9 618.2 395.3C618.8 394.8 619.0 393.5 618.7 392.8C618.4 392.1 617.0 391.3 616.5 391.4C616.0 391.5 615.4 392.9 615.4 393.6C615.4 394.3 616.5 395.1 616.7 395.4M612.0 349.6C611.5 350.3 610.2 353.0 609.0 353.7C607.8 354.4 605.9 354.2 604.9 353.7C603.9 353.1 602.7 351.6 602.7 350.4C602.7 349.2 603.9 347.2 604.9 346.6C605.9 346.1 608.2 346.6 608.7 347.1C609.2 347.6 608.3 349.2 608.2 349.6M612.0 345.5C611.6 345.2 610.7 344.4 609.9 343.8C609.1 343.2 608.5 342.3 607.4 342.1C606.3 341.9 604.0 342.9 603.2 342.6C602.4 342.3 602.3 340.9 602.7 340.4C603.1 339.9 604.8 339.5 605.7 339.6C606.6 339.8 607.8 341.0 608.2 341.3"/>
<path stroke-width="1.800" opacity=".78" d="M46.7 16.100H580.300M15 93.400V349.600M612 93.400V349.600M46.7 426.900H580.300"/>
<path stroke-width="1" stroke-dasharray="1 1.030" opacity=".42" d="M78 19.300H549M19.400 105V338M607.600 105V338M78 423.700H549"/>
</g>
<defs>
<linearGradient id="gtl" x1="0" y1="0" x2="1" y2="0"><stop offset="0" stop-color="#e9d283"/><stop offset=".35" stop-color="#dcc06c"/><stop offset="1" stop-color="#c59c40"/></linearGradient>
<linearGradient id="gtr" x1="0" y1="0" x2="1" y2="0"><stop offset="0" stop-color="#b88f33"/><stop offset=".5" stop-color="#c9a446"/><stop offset="1" stop-color="#dcc070"/></linearGradient>
<linearGradient id="gfl" x1="0" y1="0" x2="1" y2="0"><stop offset="0" stop-color="#c6a047"/><stop offset="1" stop-color="#ad8429"/></linearGradient>
<linearGradient id="gfr" x1="0" y1="0" x2="1" y2="0"><stop offset="0" stop-color="#a67d24"/><stop offset="1" stop-color="#c29a40"/></linearGradient>
<linearGradient id="gb" x1="0" y1="0" x2="1" y2="0"><stop offset="0" stop-color="#bd9335"/><stop offset=".2" stop-color="#c9a54e"/><stop offset=".45" stop-color="#e3cd82"/><stop offset=".66" stop-color="#f3e5a4"/><stop offset=".82" stop-color="#e2ca7c"/><stop offset="1" stop-color="#c49c41"/></linearGradient>
</defs>
<path fill="url(#gtl)" d="M176.1 55.5L233.0 48.9L234.5 82.0L181.6 88.0L186.6 70.8Z"/>
<path fill="url(#gtr)" d="M451.3 55.5L394.4 48.9L392.9 82.0L445.8 88.0L440.8 70.8Z"/>
<path fill="url(#gfl)" d="M205.0 62.3L233.0 48.9L234.2 59.0Z"/>
<path fill="url(#gfr)" d="M422.4 62.3L394.4 48.9L393.2 59.0Z"/>
<path fill="url(#gb)" d="M205 61.800Q313.7 46.500 422.4 61.800L416.9 95.200Q313.7 80.600 210.500 95.200Z"/>
<path fill="#1c1c1c" opacity=".88" d="M65.50 353.60h10.74v1.53h-10.74zM77.78 353.60h7.67v1.53h-7.67zM86.98 353.60h3.07v1.53h-3.07zM94.66 353.60h1.53v1.53h-1.53zM99.26 353.60h10.74v1.53h-10.74zM65.50 355.13h1.53v1.53h-1.53zM74.71 355.13h1.53v1.53h-1.53zM77.78 355.13h3.07v1.53h-3.07zM82.38 355.13h3.07v1.53h-3.07zM88.52 355.13h1.53v1.53h-1.53zM96.19 355.13h1.53v1.53h-1.53zM99.26 355.13h1.53v1.53h-1.53zM108.47 355.13h1.53v1.53h-1.53zM65.50 356.67h1.53v1.53h-1.53zM68.57 356.67h4.60v1.53h-4.60zM74.71 356.67h1.53v1.53h-1.53zM80.84 356.67h1.53v1.53h-1.53zM83.91 356.67h1.53v1.53h-1.53zM91.59 356.67h3.07v1.53h-3.07zM96.19 356.67h1.53v1.53h-1.53zM99.26 356.67h1.53v1.53h-1.53zM102.33 356.67h4.60v1.53h-4.60zM108.47 356.67h1.53v1.53h-1.53zM65.50 358.20h1.53v1.53h-1.53zM68.57 358.20h4.60v1.53h-4.60zM74.71 358.20h1.53v1.53h-1.53zM77.78 358.20h3.07v1.53h-3.07zM83.91 358.20h7.67v1.53h-7.67zM93.12 358.20h4.60v1.53h-4.60zM99.26 358.20h1.53v1.53h-1.53zM102.33 358.20h4.60v1.53h-4.60zM108.47 358.20h1.53v1.53h-1.53zM65.50 359.74h1.53v1.53h-1.53zM68.57 359.74h4.60v1.53h-4.60zM74.71 359.74h1.53v1.53h-1.53zM77.78 359.74h16.88v1.53h-16.88zM99.26 359.74h1.53v1.53h-1.53zM102.33 359.74h4.60v1.53h-4.60zM108.47 359.74h1.53v1.53h-1.53zM65.50 361.27h1.53v1.53h-1.53zM74.71 361.27h1.53v1.53h-1.53zM80.84 361.27h1.53v1.53h-1.53zM83.91 361.27h1.53v1.53h-1.53zM91.59 361.27h4.60v1.53h-4.60zM99.26 361.27h1.53v1.53h-1.53zM108.47 361.27h1.53v1.53h-1.53zM65.50 362.81h10.74v1.53h-10.74zM77.78 362.81h1.53v1.53h-1.53zM80.84 362.81h1.53v1.53h-1.53zM83.91 362.81h1.53v1.53h-1.53zM86.98 362.81h1.53v1.53h-1.53zM90.05 362.81h1.53v1.53h-1.53zM93.12 362.81h1.53v1.53h-1.53zM96.19 362.81h1.53v1.53h-1.53zM99.26 362.81h10.74v1.53h-10.74zM77.78 364.34h3.07v1.53h-3.07zM83.91 364.34h4.60v1.53h-4.60zM91.59 364.34h1.53v1.53h-1.53zM65.50 365.88h1.53v1.53h-1.53zM70.10 365.88h6.14v1.53h-6.14zM77.78 365.88h4.60v1.53h-4.60zM83.91 365.88h3.07v1.53h-3.07zM90.05 365.88h1.53v1.53h-1.53zM97.72 365.88h6.14v1.53h-6.14zM105.40 365.88h3.07v1.53h-3.07zM67.03 367.41h1.53v1.53h-1.53zM73.17 367.41h1.53v1.53h-1.53zM76.24 367.41h3.07v1.53h-3.07zM86.98 367.41h1.53v1.53h-1.53zM94.66 367.41h1.53v1.53h-1.53zM97.72 367.41h1.53v1.53h-1.53zM105.40 367.41h1.53v1.53h-1.53zM67.03 368.94h9.21v1.53h-9.21zM80.84 368.94h1.53v1.53h-1.53zM85.45 368.94h1.53v1.53h-1.53zM90.05 368.94h1.53v1.53h-1.53zM93.12 368.94h3.07v1.53h-3.07zM99.26 368.94h3.07v1.53h-3.07zM103.86 368.94h4.60v1.53h-4.60zM65.50 370.48h1.53v1.53h-1.53zM68.57 370.48h4.60v1.53h-4.60zM76.24 370.48h1.53v1.53h-1.53zM82.38 370.48h4.60v1.53h-4.60zM88.52 370.48h4.60v1.53h-4.60zM96.19 370.48h3.07v1.53h-3.07zM103.86 370.48h3.07v1.53h-3.07zM108.47 370.48h1.53v1.53h-1.53zM65.50 372.01h1.53v1.53h-1.53zM71.64 372.01h1.53v1.53h-1.53zM74.71 372.01h1.53v1.53h-1.53zM77.78 372.01h3.07v1.53h-3.07zM83.91 372.01h3.07v1.53h-3.07zM88.52 372.01h10.74v1.53h-10.74zM100.79 372.01h1.53v1.53h-1.53zM103.86 372.01h6.14v1.53h-6.14zM65.50 373.55h1.53v1.53h-1.53zM70.10 373.55h3.07v1.53h-3.07zM77.78 373.55h3.07v1.53h-3.07zM82.38 373.55h1.53v1.53h-1.53zM88.52 373.55h1.53v1.53h-1.53zM94.66 373.55h7.67v1.53h-7.67zM103.86 373.55h4.60v1.53h-4.60zM68.57 375.08h10.74v1.53h-10.74zM83.91 375.08h1.53v1.53h-1.53zM86.98 375.08h7.67v1.53h-7.67zM96.19 375.08h1.53v1.53h-1.53zM99.26 375.08h10.74v1.53h-10.74zM65.50 376.62h1.53v1.53h-1.53zM76.24 376.62h3.07v1.53h-3.07zM80.84 376.62h1.53v1.53h-1.53zM85.45 376.62h1.53v1.53h-1.53zM94.66 376.62h1.53v1.53h-1.53zM65.50 378.15h7.67v1.53h-7.67zM74.71 378.15h1.53v1.53h-1.53zM80.84 378.15h3.07v1.53h-3.07zM91.59 378.15h1.53v1.53h-1.53zM94.66 378.15h4.60v1.53h-4.60zM100.79 378.15h1.53v1.53h-1.53zM105.40 378.15h4.60v1.53h-4.60zM71.64 379.69h3.07v1.53h-3.07zM77.78 379.69h1.53v1.53h-1.53zM80.84 379.69h4.60v1.53h-4.60zM90.05 379.69h1.53v1.53h-1.53zM93.12 379.69h4.60v1.53h-4.60zM99.26 379.69h1.53v1.53h-1.53zM103.86 379.69h3.07v1.53h-3.07zM65.50 381.22h4.60v1.53h-4.60zM71.64 381.22h1.53v1.53h-1.53zM74.71 381.22h1.53v1.53h-1.53zM79.31 381.22h1.53v1.53h-1.53zM86.98 381.22h1.53v1.53h-1.53zM90.05 381.22h13.81v1.53h-13.81zM105.40 381.22h1.53v1.53h-1.53zM65.50 382.76h1.53v1.53h-1.53zM71.64 382.76h3.07v1.53h-3.07zM79.31 382.76h7.67v1.53h-7.67zM88.52 382.76h1.53v1.53h-1.53zM91.59 382.76h3.07v1.53h-3.07zM96.19 382.76h3.07v1.53h-3.07zM67.03 384.29h1.53v1.53h-1.53zM70.10 384.29h1.53v1.53h-1.53zM74.71 384.29h3.07v1.53h-3.07zM79.31 384.29h6.14v1.53h-6.14zM88.52 384.29h1.53v1.53h-1.53zM91.59 384.29h1.53v1.53h-1.53zM94.66 384.29h10.74v1.53h-10.74zM108.47 384.29h1.53v1.53h-1.53zM80.84 385.82h3.07v1.53h-3.07zM85.45 385.82h6.14v1.53h-6.14zM93.12 385.82h1.53v1.53h-1.53zM96.19 385.82h1.53v1.53h-1.53zM102.33 385.82h4.60v1.53h-4.60zM65.50 387.36h10.74v1.53h-10.74zM77.78 387.36h1.53v1.53h-1.53zM85.45 387.36h4.60v1.53h-4.60zM96.19 387.36h1.53v1.53h-1.53zM99.26 387.36h1.53v1.53h-1.53zM102.33 387.36h1.53v1.53h-1.53zM105.40 387.36h1.53v1.53h-1.53zM65.50 388.89h1.53v1.53h-1.53zM74.71 388.89h1.53v1.53h-1.53zM79.31 388.89h3.07v1.53h-3.07zM83.91 388.89h4.60v1.53h-4.60zM93.12 388.89h4.60v1.53h-4.60zM102.33 388.89h3.07v1.53h-3.07zM106.93 388.89h3.07v1.53h-3.07zM65.50 390.43h1.53v1.53h-1.53zM68.57 390.43h4.60v1.53h-4.60zM74.71 390.43h1.53v1.53h-1.53zM82.38 390.43h1.53v1.53h-1.53zM85.45 390.43h1.53v1.53h-1.53zM88.52 390.43h3.07v1.53h-3.07zM93.12 390.43h1.53v1.53h-1.53zM96.19 390.43h7.67v1.53h-7.67zM105.40 390.43h4.60v1.53h-4.60zM65.50 391.96h1.53v1.53h-1.53zM68.57 391.96h4.60v1.53h-4.60zM74.71 391.96h1.53v1.53h-1.53zM80.84 391.96h3.07v1.53h-3.07zM86.98 391.96h1.53v1.53h-1.53zM90.05 391.96h10.74v1.53h-10.74zM102.33 391.96h1.53v1.53h-1.53zM105.40 391.96h3.07v1.53h-3.07zM65.50 393.50h1.53v1.53h-1.53zM68.57 393.50h4.60v1.53h-4.60zM74.71 393.50h1.53v1.53h-1.53zM79.31 393.50h3.07v1.53h-3.07zM85.45 393.50h4.60v1.53h-4.60zM91.59 393.50h1.53v1.53h-1.53zM96.19 393.50h3.07v1.53h-3.07zM102.33 393.50h1.53v1.53h-1.53zM105.40 393.50h4.60v1.53h-4.60zM65.50 395.03h1.53v1.53h-1.53zM74.71 395.03h1.53v1.53h-1.53zM79.31 395.03h6.14v1.53h-6.14zM86.98 395.03h1.53v1.53h-1.53zM96.19 395.03h4.60v1.53h-4.60zM102.33 395.03h3.07v1.53h-3.07zM106.93 395.03h3.07v1.53h-3.07zM65.50 396.57h10.74v1.53h-10.74zM77.78 396.57h3.07v1.53h-3.07zM82.38 396.57h4.60v1.53h-4.60zM94.66 396.57h1.53v1.53h-1.53zM97.72 396.57h1.53v1.53h-1.53zM100.79 396.57h1.53v1.53h-1.53zM103.86 396.57h6.14v1.53h-6.14z"/>
<defs><linearGradient id="gbd" x1="0" y1="0" x2="1" y2="1"><stop offset="0" stop-color="#f0cc5e"/><stop offset=".3" stop-color="#d59c22"/><stop offset=".55" stop-color="#ecc24c"/><stop offset=".8" stop-color="#b97d12"/><stop offset="1" stop-color="#dba92f"/></linearGradient>
<linearGradient id="gbd2" x1="0" y1="0" x2="1" y2="1"><stop offset="0" stop-color="#c98e1c"/><stop offset=".5" stop-color="#f6d972"/><stop offset="1" stop-color="#d9a227"/></linearGradient></defs>
<path fill="url(#gbd)" d="M348.1 366.9L348.1 367.5L347.9 368.1L347.7 368.7L347.4 369.3L347.1 369.8L346.7 370.4L346.4 370.9L346.2 371.5L345.9 372.0L345.8 372.6L345.7 373.1L345.8 373.7L345.8 374.3L345.9 375.0L346.1 375.6L346.2 376.2L346.2 376.9L346.2 377.5L346.2 378.1L346.0 378.7L345.8 379.2L345.4 379.8L345.0 380.2L344.5 380.7L344.1 381.1L343.5 381.5L343.1 381.9L342.6 382.3L342.2 382.8L341.9 383.2L341.7 383.8L341.5 384.3L341.3 384.9L341.2 385.5L341.1 386.2L341.0 386.8L340.9 387.4L340.7 388.0L340.4 388.6L340.0 389.1L339.6 389.5L339.1 389.9L338.6 390.2L338.0 390.4L337.4 390.7L336.7 390.9L336.2 391.1L335.6 391.3L335.1 391.6L334.6 391.9L334.2 392.3L333.8 392.8L333.5 393.3L333.2 393.9L332.9 394.4L332.5 395.0L332.2 395.5L331.8 396.0L331.3 396.4L330.9 396.8L330.3 397.0L329.7 397.2L329.1 397.3L328.5 397.3L327.8 397.4L327.2 397.3L326.5 397.3L325.9 397.4L325.3 397.5L324.8 397.6L324.3 397.9L323.8 398.2L323.3 398.5L322.8 398.9L322.3 399.4L321.8 399.8L321.3 400.2L320.7 400.5L320.2 400.7L319.6 400.9L319.0 400.9L318.4 400.9L317.8 400.8L317.1 400.6L316.5 400.4L315.9 400.1L315.3 399.9L314.7 399.8L314.2 399.6L313.6 399.6L313.0 399.6L312.5 399.8L311.9 399.9L311.3 400.1L310.7 400.4L310.1 400.6L309.4 400.8L308.8 400.9L308.2 400.9L307.6 400.9L307.0 400.7L306.5 400.5L305.9 400.2L305.4 399.8L304.9 399.4L304.4 398.9L303.9 398.5L303.4 398.2L302.9 397.9L302.4 397.6L301.9 397.5L301.3 397.4L300.7 397.3L300.0 397.3L299.4 397.4L298.7 397.3L298.1 397.3L297.5 397.2L296.9 397.0L296.4 396.8L295.9 396.4L295.4 396.0L295.0 395.5L294.7 395.0L294.3 394.4L294.0 393.9L293.7 393.3L293.4 392.8L293.0 392.3L292.6 391.9L292.1 391.6L291.6 391.3L291.0 391.1L290.5 390.9L289.8 390.7L289.2 390.4L288.6 390.2L288.1 389.9L287.6 389.5L287.2 389.1L286.8 388.6L286.5 388.0L286.3 387.4L286.2 386.8L286.1 386.2L286.0 385.5L285.9 384.9L285.7 384.3L285.5 383.8L285.3 383.2L285.0 382.8L284.6 382.3L284.1 381.9L283.7 381.5L283.1 381.1L282.7 380.7L282.2 380.2L281.8 379.8L281.4 379.2L281.2 378.7L281.0 378.1L281.0 377.5L281.0 376.9L281.0 376.2L281.1 375.6L281.3 375.0L281.4 374.3L281.4 373.7L281.5 373.1L281.4 372.6L281.3 372.0L281.0 371.5L280.8 370.9L280.5 370.4L280.1 369.8L279.8 369.3L279.5 368.7L279.3 368.1L279.1 367.5L279.1 366.9L279.1 366.3L279.3 365.7L279.5 365.1L279.8 364.5L280.1 364.0L280.5 363.4L280.8 362.9L281.0 362.3L281.3 361.8L281.4 361.2L281.5 360.7L281.4 360.1L281.4 359.5L281.3 358.8L281.1 358.2L281.0 357.6L281.0 356.9L281.0 356.3L281.0 355.7L281.2 355.1L281.4 354.6L281.8 354.0L282.2 353.6L282.7 353.1L283.1 352.7L283.7 352.3L284.1 351.9L284.6 351.5L285.0 351.0L285.3 350.5L285.5 350.0L285.7 349.5L285.9 348.9L286.0 348.3L286.1 347.6L286.2 347.0L286.3 346.4L286.5 345.8L286.8 345.2L287.2 344.7L287.6 344.3L288.1 343.9L288.6 343.6L289.2 343.4L289.8 343.1L290.5 342.9L291.0 342.7L291.6 342.5L292.1 342.2L292.6 341.9L293.0 341.5L293.4 341.0L293.7 340.5L294.0 339.9L294.3 339.4L294.7 338.8L295.0 338.3L295.4 337.8L295.9 337.4L296.4 337.0L296.9 336.8L297.5 336.6L298.1 336.5L298.7 336.5L299.4 336.4L300.0 336.5L300.7 336.5L301.3 336.4L301.9 336.3L302.4 336.2L302.9 335.9L303.4 335.6L303.9 335.3L304.4 334.9L304.9 334.4L305.4 334.0L305.9 333.6L306.5 333.3L307.0 333.1L307.6 332.9L308.2 332.9L308.8 332.9L309.4 333.0L310.1 333.2L310.7 333.4L311.3 333.7L311.9 333.9L312.5 334.0L313.0 334.2L313.6 334.2L314.2 334.2L314.7 334.0L315.3 333.9L315.9 333.7L316.5 333.4L317.1 333.2L317.8 333.0L318.4 332.9L319.0 332.9L319.6 332.9L320.2 333.1L320.7 333.3L321.3 333.6L321.8 334.0L322.3 334.4L322.8 334.9L323.3 335.3L323.8 335.6L324.3 335.9L324.8 336.2L325.3 336.3L325.9 336.4L326.5 336.5L327.2 336.5L327.8 336.4L328.5 336.5L329.1 336.5L329.7 336.6L330.3 336.8L330.9 337.0L331.3 337.4L331.8 337.8L332.2 338.3L332.5 338.8L332.9 339.4L333.2 339.9L333.5 340.5L333.8 341.0L334.2 341.5L334.6 341.9L335.1 342.2L335.6 342.5L336.2 342.7L336.7 342.9L337.4 343.1L338.0 343.4L338.6 343.6L339.1 343.9L339.6 344.3L340.0 344.7L340.4 345.2L340.7 345.8L340.9 346.4L341.0 347.0L341.1 347.6L341.2 348.3L341.3 348.9L341.5 349.5L341.7 350.0L341.9 350.5L342.2 351.0L342.6 351.5L343.1 351.9L343.5 352.3L344.1 352.7L344.5 353.1L345.0 353.6L345.4 354.0L345.8 354.6L346.0 355.1L346.2 355.7L346.2 356.3L346.2 356.9L346.2 357.6L346.1 358.2L345.9 358.8L345.8 359.5L345.8 360.1L345.7 360.7L345.8 361.2L345.9 361.8L346.2 362.3L346.4 362.9L346.7 363.4L347.1 364.0L347.4 364.5L347.7 365.1L347.9 365.7L348.1 366.3L348.1 366.9Z"/>
<circle cx="313.6" cy="366.9" r="30" fill="url(#gbd2)"/>
<circle cx="313.6" cy="366.9" r="27.300" fill="#0b0b0d"/>
<circle cx="313.6" cy="366.9" r="25.300" fill="none" stroke="#c79a2c" stroke-width=".6"/>
<path fill="#e6b93e" d="M303.7 385.4C304.4 383.1 303.0 379.1 300.7 378.7C299.6 380.7 301.6 384.4 303.7 385.4ZM303.7 385.4C302.4 384.1 299.4 383.8 298.4 385.4C299.4 387.1 302.4 386.8 303.7 385.4ZM299.8 382.7C301.0 380.7 300.5 376.6 298.4 375.7C296.9 377.3 298.0 381.3 299.8 382.7ZM299.8 382.7C298.9 381.1 296.1 380.2 294.8 381.6C295.3 383.4 298.3 383.8 299.8 382.7ZM296.6 379.2C298.2 377.5 298.7 373.6 296.9 372.2C295.0 373.4 295.2 377.4 296.6 379.2ZM296.6 379.2C296.1 377.5 293.6 375.9 292.1 377.0C292.2 378.9 294.9 379.9 296.6 379.2ZM294.3 375.1C296.2 373.9 297.5 370.2 296.0 368.5C293.9 369.2 293.3 373.1 294.3 375.1ZM294.3 375.1C294.2 373.3 292.2 371.3 290.5 372.0C290.1 373.9 292.5 375.4 294.3 375.1ZM292.9 370.5C295.0 369.8 297.1 366.6 296.0 364.7C293.8 364.9 292.4 368.4 292.9 370.5ZM292.9 370.5C293.3 368.8 291.8 366.4 290.0 366.8C289.2 368.5 291.1 370.4 292.9 370.5ZM292.6 365.8C294.8 365.6 297.5 363.1 296.8 361.0C294.7 360.6 292.5 363.6 292.6 365.8ZM292.6 365.8C293.4 364.2 292.5 361.7 290.7 361.6C289.5 363.1 290.9 365.3 292.6 365.8ZM293.4 361.1C295.6 361.4 298.6 359.6 298.4 357.5C296.4 356.6 293.8 359.0 293.4 361.1ZM293.4 361.1C294.5 359.7 294.3 357.2 292.5 356.7C291.0 357.9 291.9 360.3 293.4 361.1ZM295.2 356.7C297.2 357.5 300.5 356.5 300.8 354.4C299.0 353.1 296.0 354.7 295.2 356.7ZM295.2 356.7C296.6 355.7 297.0 353.2 295.3 352.4C293.6 353.1 293.9 355.6 295.2 356.7ZM298.0 352.8C299.7 354.1 303.0 353.9 303.7 351.8C302.4 350.2 299.2 351.1 298.0 352.8ZM298.0 352.8C299.6 352.2 300.4 349.9 299.0 348.8C297.2 349.1 296.9 351.5 298.0 352.8ZM301.6 349.7C302.9 351.3 306.0 351.8 307.1 350.0C306.2 348.1 303.0 348.3 301.6 349.7ZM301.6 349.7C303.2 349.4 304.5 347.5 303.4 346.1C301.6 346.0 300.8 348.2 301.6 349.7ZM323.5 385.4C325.6 384.4 327.6 380.7 326.5 378.7C324.2 379.1 322.8 383.1 323.5 385.4ZM323.5 385.4C324.8 386.8 327.8 387.1 328.8 385.4C327.8 383.8 324.8 384.1 323.5 385.4ZM327.4 382.7C329.2 381.3 330.3 377.3 328.8 375.7C326.7 376.6 326.2 380.7 327.4 382.7ZM327.4 382.7C328.9 383.8 331.9 383.4 332.4 381.6C331.1 380.2 328.3 381.1 327.4 382.7ZM330.6 379.2C332.0 377.4 332.2 373.4 330.3 372.2C328.5 373.6 329.0 377.5 330.6 379.2ZM330.6 379.2C332.3 379.9 335.0 378.9 335.1 377.0C333.6 375.9 331.1 377.5 330.6 379.2ZM332.9 375.1C333.9 373.1 333.3 369.2 331.2 368.5C329.7 370.2 331.0 373.9 332.9 375.1ZM332.9 375.1C334.7 375.4 337.1 373.9 336.7 372.0C335.0 371.3 333.0 373.3 332.9 375.1ZM334.3 370.5C334.8 368.4 333.4 364.9 331.2 364.7C330.1 366.6 332.2 369.8 334.3 370.5ZM334.3 370.5C336.1 370.4 338.0 368.5 337.2 366.8C335.4 366.4 333.9 368.8 334.3 370.5ZM334.6 365.8C334.7 363.6 332.5 360.6 330.4 361.0C329.7 363.1 332.4 365.6 334.6 365.8ZM334.6 365.8C336.3 365.3 337.7 363.1 336.5 361.6C334.7 361.7 333.8 364.2 334.6 365.8ZM333.8 361.1C333.4 359.0 330.8 356.6 328.8 357.5C328.6 359.6 331.6 361.4 333.8 361.1ZM333.8 361.1C335.3 360.3 336.2 357.9 334.7 356.7C332.9 357.2 332.7 359.7 333.8 361.1ZM332.0 356.7C331.2 354.7 328.2 353.1 326.4 354.4C326.7 356.5 330.0 357.5 332.0 356.7ZM332.0 356.7C333.3 355.6 333.6 353.1 331.9 352.4C330.2 353.2 330.6 355.7 332.0 356.7ZM329.2 352.8C328.0 351.1 324.8 350.2 323.5 351.8C324.2 353.9 327.5 354.1 329.2 352.8ZM329.2 352.8C330.3 351.5 330.0 349.1 328.2 348.8C326.8 349.9 327.6 352.2 329.2 352.8ZM325.6 349.7C324.2 348.3 321.0 348.1 320.1 350.0C321.2 351.8 324.3 351.3 325.6 349.7ZM325.6 349.7C326.4 348.2 325.6 346.0 323.8 346.1C322.7 347.5 324.0 349.4 325.6 349.7Z"/>
</svg>
<div class="ct" style="left:320.7px;top:58.7px;font-size:22.20px;line-height:26.64px;color:#3c3c3e;font-weight:normal;">CERTIFICATE</div>
<div class="ct" style="left:316.3px;top:95.8px;font-size:10.50px;line-height:12.60px;color:#505050;font-weight:normal;">OF ACHIEVEMENT</div>
<div class="ct" style="left:328.2px;top:116.8px;font-size:10.40px;line-height:12.48px;color:#505050;font-weight:normal;">THIS CERTIFICATE IS PROUDLY PRESENTED FOR HONORABLE ACHIEVEMENT TO</div>
<div class="ct" style="left:314.1px;top:139.0px;font-size:37.20px;line-height:44.64px;color:#cb9834;font-weight:normal;">[STUDENT_NAME]</div>
<div class="abs" style="left:155.0px;top:183.5px;width:317px;height:2px;background:#424242"></div>
<div class="ct" style="left:313.2px;top:198.5px;font-size:17.00px;line-height:20.40px;color:#444;font-weight:normal;">[COURSE_TITLE]</div>
<div class="ct" style="left:313.1px;top:231.2px;font-size:10.40px;line-height:12.48px;color:#585858;font-weight:normal;word-spacing:-.278em;">Lorem ipsum dolor sit amet, consectetur adipiscing elit.</div>
<div class="ct" style="left:313.5px;top:243.9px;font-size:10.40px;line-height:12.48px;color:#585858;font-weight:normal;word-spacing:-.278em;">Praesent congue pretium est, non aliquet urna placerat sit amet.</div>
<div class="ct" style="left:318.9px;top:273.2px;font-size:10.45px;line-height:12.54px;color:#4a4a4a;font-weight:normal;"><b>Start Date:</b>[COURSE_START_DATE]&nbsp; <b>End Date:</b>[COURSE_END_DATE]</div>
<div class="ct" style="left:459.5px;top:366.2px;font-size:17.85px;line-height:21.42px;color:#444;font-weight:normal;">[INSTRUCTOR_NAME]</div>
<div class="abs" style="left:390.8px;top:386.7px;width:134px;height:2px;background:#424242"></div>
<div class="ct" style="left:460.2px;top:394.7px;font-size:8.90px;line-height:10.68px;color:#b98c3c;font-weight:bold;">INSTRUCTOR</div>
<div class="ct" style="left:313.6px;top:355.7px;font-size:8.10px;line-height:9.72px;color:#d9ac3c;font-weight:bold;">2026</div>
<div class="ct" style="left:313.4px;top:366.6px;font-size:8.20px;line-height:9.84px;color:#d9ac3c;font-weight:bold;">AWARD</div>
</div>
</body>
</html>
